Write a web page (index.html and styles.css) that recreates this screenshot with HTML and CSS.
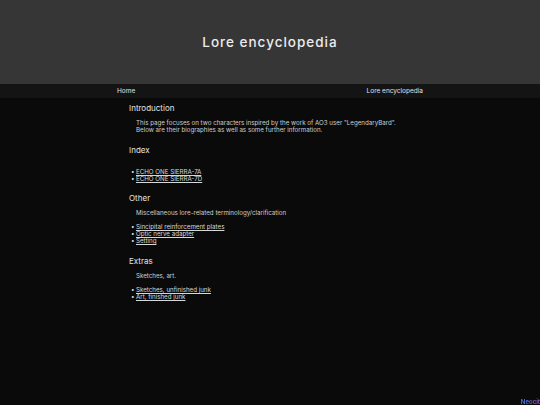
FILE: index.html
```html
<!DOCTYPE html>
<html>
<head>
<meta charset="utf-8">
<title>Lore encyclopedia</title>
<link rel="stylesheet" href="styles.css">
</head>
<body>
<header class="site-header">
  <h1 class="site-title">Lore encyclopedia</h1>
</header>
<nav class="nav-bar">
  <div class="nav-inner">
    <a class="nav-link" href="#">Home</a>
    <a class="nav-link" href="#">Lore encyclopedia</a>
  </div>
</nav>
<main class="content">
  <section class="block intro">
    <h2 class="block-title">Introduction</h2>
    <p class="block-text">This page focuses on two characters inspired by the work of AO3 user "LegendaryBard".<br>Below are their biographies as well as some further information.</p>
  </section>
  <section class="block index">
    <h2 class="block-title">Index</h2>
    <ul class="link-list spaced">
      <li><a href="#">ECHO ONE SIERRA-7A</a></li>
      <li><a href="#">ECHO ONE SIERRA-7D</a></li>
    </ul>
  </section>
  <section class="block">
    <h2 class="block-title">Other</h2>
    <p class="block-text">Miscellaneous lore-related terminology/clarification</p>
    <ul class="link-list">
      <li><a href="#">Sincipital reinforcement plates</a></li>
      <li><a href="#">Optic nerve adapter</a></li>
      <li><a href="#">Setting</a></li>
    </ul>
  </section>
  <section class="block">
    <h2 class="block-title">Extras</h2>
    <p class="block-text">Sketches, art.</p>
    <ul class="link-list">
      <li><a href="#">Sketches, unfinished junk</a></li>
      <li><a href="#">Art, finished junk</a></li>
    </ul>
  </section>
</main>
<div class="badge">Neocit</div>
</body>
</html>
```
FILE: styles.css
```css
html, body {
  margin: 0;
  padding: 0;
  background: #0a0a0a;
  color: #d8d8d8;
  font-family: "Inter", "DejaVu Sans", sans-serif;
  height: 100%;
}
.site-header {
  height: 84px;
  background: #363636;
  display: flex;
  align-items: center;
  justify-content: center;
}
.site-title {
  margin: 0;
  font-size: 13.5px;
  font-weight: 500;
  letter-spacing: 1px;
  color: #ececec;
}
.nav-bar {
  height: 14px;
  background: #141414;
}
.nav-inner {
  width: 306px;
  margin: 0 auto;
  height: 14px;
  display: flex;
  justify-content: space-between;
  align-items: center;
}
.nav-link {
  color: #e0e0e0;
  text-decoration: none;
  font-size: 6.5px;
  font-weight: 400;
}
.content {
  width: 294px;
  margin: 0 auto;
  padding: 6px 0 0 12px;
  box-sizing: content-box;
}
.block {
  margin-bottom: 13px;
}
.block.index {
  margin-bottom: 12px;
}
.block-title {
  margin: 0 0 7px 0;
  font-size: 8px;
  line-height: 8px;
  font-weight: 400;
  color: #e4e4e4;
}
.block-text {
  margin: 0 0 7px 7px;
  font-size: 6.2px;
  line-height: 7px;
  font-weight: 400;
  color: #cfcfcf;
}
.link-list {
  margin: 0;
  padding-left: 2px;
  list-style: none;
  font-size: 6.2px;
  line-height: 7px;
  font-weight: 400;
}
.link-list li {
  height: 7px;
}
.link-list li::before {
  content: "\2022";
  display: inline-block;
  width: 5px;
  color: #d8d8d8;
}
.link-list.spaced {
  margin-top: 14px;
}
.link-list a {
  color: #d8d8d8;
}
.badge {
  position: fixed;
  right: 0;
  bottom: 0;
  font-size: 6px;
  line-height: 7px;
  font-weight: bold;
  background: linear-gradient(90deg, #3a7bd5, #6a5acd, #9b59b6);
  -webkit-background-clip: text;
  background-clip: text;
  color: transparent;
}
```
